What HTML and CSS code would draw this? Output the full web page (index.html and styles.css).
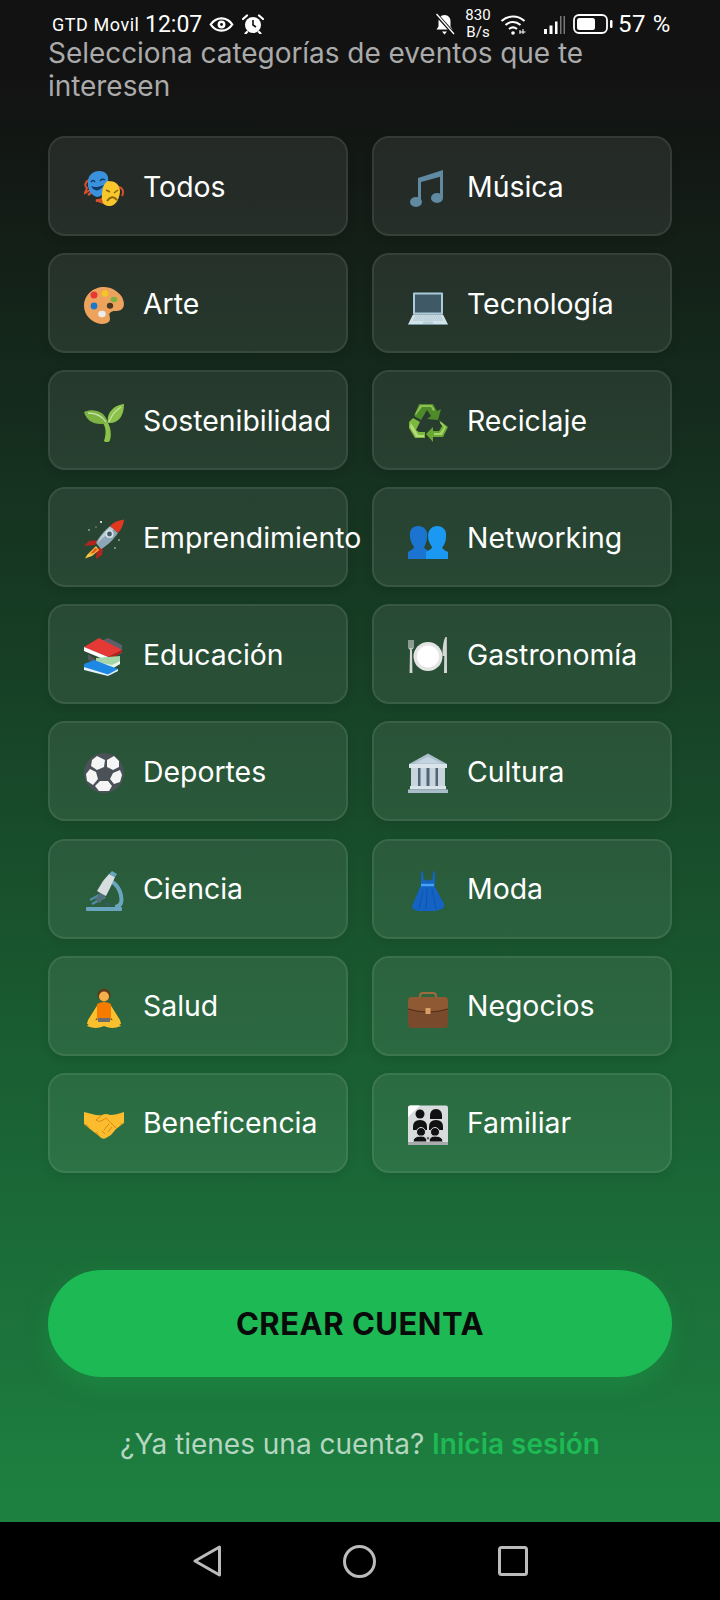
FILE: index.html
```html
<!DOCTYPE html>
<html lang="es">
<head>
<meta charset="utf-8">
<title>Crear cuenta</title>
<link rel="stylesheet" href="styles.css">
</head>
<body>
<div class="screen">
  <main class="app">
    <header class="status">
      <span class="carrier">GTD Movil</span>
      <span class="clock">12:07</span>
      <svg class="st-eye" viewBox="0 0 26 16"><path d="M1.500 8C4.500 3.500 8.500 1.500 13 1.500S21.500 3.500 24.500 8C21.500 12.500 17.500 14.500 13 14.500S4.500 12.500 1.500 8Z" fill="none" stroke="#fff" stroke-width="2.400"/><circle cx="13" cy="8" r="4.200" fill="#fff"/><circle cx="13" cy="8" r="1.500" fill="#111"/></svg>
      <svg class="st-alarm" viewBox="0 0 22 20"><circle cx="11" cy="11" r="8" fill="#fff"/><path d="M1 5 5 1.500M21 5 17 1.500M5 18 3.500 19.500M17 18 18.500 19.500" stroke="#fff" stroke-width="2.200" stroke-linecap="round"/><path d="M11 6v5l3 2" stroke="#111" stroke-width="1.600" fill="none"/></svg>
      <svg class="st-bell" viewBox="0 0 21 22"><path d="M10.500 2c4 0 6 3 6 6.500v5l2 3H2.500l2-3v-5C4.500 5 6.500 2 10.500 2Z" fill="#fff"/><path d="M8 18.500h5L10.500 21.500Z" fill="#fff"/><path d="M2 1 20 21" stroke="#111" stroke-width="3.500"/><path d="M2.500 1 20 21" stroke="#fff" stroke-width="1.300"/></svg>
      <span class="speed"><span>830</span><span>B/s</span></span>
      <svg class="st-wifi" viewBox="0 0 27 21"><path d="M1.500 7C8 1 18 1 24.500 7M5.500 11C10 7 16 7 20.500 11M9 15C11.500 13 14.500 13 17 15" fill="none" stroke="#fff" stroke-width="2"/><circle cx="13" cy="19" r="1.800" fill="#fff"/><path d="M20 20v-4M23 20v-5M25.500 18h-6" stroke="#fff" stroke-width="1"/></svg>
      <svg class="st-signal" viewBox="0 0 22 19"><path d="M1 14h3v5H1ZM6.500 10.500h3V19h-3ZM12 6.500h2.500V19H12Z" fill="#fff"/><path d="M17 1h1.500v18H17ZM20.500 1H22v18h-1.500Z" fill="#777"/></svg>
      <svg class="st-batt" viewBox="0 0 40 20"><rect x="1" y="1" width="33" height="18" rx="5" fill="none" stroke="#fff" stroke-width="1.800"/><rect x="4" y="4" width="18" height="12" rx="2.500" fill="#fff"/><rect x="37" y="6" width="2.500" height="8" rx="1.200" fill="#fff"/></svg>
      <span class="pct">57 %</span>
    </header>

    <div class="content">
      <p class="lead">Selecciona categorías de eventos que te interesen</p>

      <section class="grid">
        <button class="card"><svg class="ico" viewBox="0 0 40 40"><path d="M5 12C1 14 0 18 3 20L1 25 6 22 9 23M30 34 22 36 12 32M35 19C39 20 40 24 38 28" fill="none" stroke="#d9502e" stroke-width="2"/><path d="M8 24 4 27M19 31 12 33" stroke="#d9502e" stroke-width="2.500"/><path d="M15 3C22 3 25 7 24 14 23 22 18 29 13 29 7 28 3 20 4 14 4 7 9 3 15 3Z" fill="#3a92dc"/><path d="M7 14Q9 11 11 14M16 13Q18 10 21 12" fill="none" stroke="#123a66" stroke-width="1.500"/><path d="M7 18C10 24 16 24 20 17 15 19 11 20 7 18Z" fill="#123a66"/><path d="M24 13C31 13 36 16 36 24 35 33 30 39 25 38 19 38 17 33 18 26 18 22 20 14 24 13Z" fill="#f7c72c"/><path d="M22 22 26 24M34 22 30 25" stroke="#8a6508" stroke-width="1.500"/><path d="M23 33Q28 26 33 32" fill="none" stroke="#8a6508" stroke-width="2"/></svg><span>Todos</span></button>
        <button class="card"><svg class="ico" viewBox="0 0 40 40"><g fill="#5f8aa2"><path d="M10 10 35 2V8L13 14Z"/><path d="M10 10h3v24h-3ZM32 4h3v26h-3Z"/><ellipse cx="8" cy="34" rx="6" ry="5"/><ellipse cx="29" cy="30" rx="6" ry="5"/></g></svg><span>Música</span></button>

        <button class="card"><svg class="ico" viewBox="0 0 40 40"><path d="M20 2C9 2 0 10 0 21c0 9 8 17 17 18 4 0 9-1 9-5 0-3-2-5 1-7 3-2 8 0 11-3 3-3 2-8 0-12C34 6 27 2 20 2Z" fill="#eea35c"/><circle cx="10" cy="10" r="3.500" fill="#e53935"/><circle cx="21" cy="8.500" r="3.200" fill="#f3c623"/><ellipse cx="30" cy="14.500" rx="3.400" ry="2.800" fill="#7cb342"/><ellipse cx="26" cy="20.700" rx="3.200" ry="3" fill="#4a3423"/><circle cx="10" cy="21" r="3.400" fill="#1e78c8"/><ellipse cx="18" cy="29" rx="3.800" ry="3.200" fill="#ececec"/></svg><span>Arte</span></button>
        <button class="card"><svg class="ico" viewBox="0 0 40 40"><rect x="5" y="7.500" width="30" height="22" rx="1" fill="#a9ccdc"/><rect x="7" y="9.500" width="26" height="18" fill="#3f5a66"/><path d="M5 29.500H35L40 39.500H0Z" fill="#d3e3ea"/><path d="M7 31H33M6 33H34M5 35H35" stroke="#9db9c6" stroke-width="1" stroke-dasharray="1.500 .7"/><path d="M0 39.500H40V40.500H0Z" fill="#6ea0b4"/><path d="M15 36.500H25V39H15Z" fill="#b9d0db"/></svg><span>Tecnología</span></button>

        <button class="card"><svg class="ico" viewBox="0 0 40 40"><path d="M17 19C23 24 22 33 20 39 22 41 26 40 26 38 28 31 26 24 23 19Z" fill="#8bc34a"/><path d="M0 10C9 6 21 9 24 21 12 24 3 20 0 10Z" fill="#7cb342"/><path d="M40 2C40 13 35 22 24 21 22 11 30 3 40 2Z" fill="#8bc34a"/><path d="M4 11C11 11 18 14 22 20M37 5C31 9 27 14 25 20" fill="none" stroke="#c5e1a5" stroke-width="1.300"/></svg><span>Sostenibilidad</span></button>
        <button class="card"><svg class="ico" viewBox="0 0 40 40"><path d="M11 2H25L29 9 33 7 30 18 19 17 23 14 19 8 13 18 6 14Z" fill="#4e8a2a"/><path d="M31 18 40 25 35 35H25V40L18 32 25 25V29H31L34 24Z" fill="#6aa834"/><path d="M5 16 12 20 8 28 11 30H17V36H7L1 26V20Z" fill="#7cb83e"/><path d="M12 3H24L27 8 25 9 23 5H14L8 13 7 12Z" fill="#8cc152"/><path d="M33 20 38 25 34 33H26V31H32L36 25 32 21Z" fill="#a5d46a"/><path d="M3 21 8 29 10 33H16V35H8L2 25Z" fill="#b3dc79"/></svg><span>Reciclaje</span></button>

        <button class="card"><svg class="ico" viewBox="0 0 40 40"><path d="M14 21 5 22 0 27 11 26ZM19 29 18 36 12 40 13 29Z" fill="#b3261e"/><path d="M12 27 3 36 1 39.500 8 37 15 31Z" fill="#f4c542"/><path d="M11 29 6 35 10 34 14 30Z" fill="#e65b1c"/><path d="M26 7C21 11 14 19 12 24L17 30C23 27 30 20 34 14Z" fill="#8ca6b5"/><path d="M26 8C21 12 16 18 13.500 24L20 18C24 15 28 12 30 10Z" fill="#b9ccd6"/><path d="M40 .5C35 1 30 3 26 7L34 14C37.500 10 39.500 6 40 .5Z" fill="#e0391f"/><circle cx="25.500" cy="15" r="4" fill="#d5e1e7"/><circle cx="25.500" cy="15" r="2.400" fill="#455a64"/><g fill="#fff"><circle cx="17" cy="3" r="1"/><circle cx="5" cy="11" r=".7"/><circle cx="35" cy="21" r=".7"/><circle cx="31" cy="29" r=".7"/><circle cx="12" cy="8" r=".5"/></g></svg><span>Emprendimiento</span></button>
        <button class="card"><svg class="ico" viewBox="0 0 40 40"><path d="M10 7C16 7 20 11 19 18 19 23 17 26 16 29L22 33V40H0V33C3 31 6 30 6 28 4 25 2 22 2 17 1 11 5 7 10 7Z" fill="#1b75d0"/><path d="M29 7C35 7 39 11 38 18 38 23 36 26 34 29 36 31 38 32 40 33V40H18V33C21 31 24 30 24 28 22 25 20 22 20 17 20 11 24 7 29 7Z" fill="#1a98f2"/></svg><span>Networking</span></button>

        <button class="card"><svg class="ico" viewBox="0 0 40 40"><path d="M15 6 24 2 38 9 38 17 24 24 0 15Z" fill="#5d5f6b"/><path d="M0 11 15 2 38 14 24 21Z" fill="#e53935"/><path d="M0 11V15L24 25V21Z" fill="#fff"/><path d="M24 21 38 14V16L24 25Z" fill="#b71c1c"/><path d="M4 18 12 24 12 28 4 24Z" fill="#555"/><path d="M12 22 36 20V28L20 33 12 28Z" fill="#a5d6a7"/><path d="M12 26 28 29 36 25V28L28 33 12 30Z" fill="#e8f5e9"/><path d="M0 28 10 24 34 33 24 39 0 31Z" fill="#1e88e5"/><path d="M0 31 24 38.500 34 33V35L24 40 0 34Z" fill="#e3f2fd"/></svg><span>Educación</span></button>
        <button class="card"><svg class="ico" viewBox="0 0 40 40"><path d="M3 14V4M1 4V11C1 14 5 14 5 11V4" fill="none" stroke="#cfcfcf" stroke-width="1.200"/><path d="M2 14 1.600 37H4.400L4 14Z" fill="#d6d6d6"/><circle cx="20" cy="20.500" r="14.500" fill="#e4e4e4"/><circle cx="20" cy="20.500" r="11" fill="#fff"/><path d="M37.500 1C35 5 34.500 14 34.500 20H36.300L36 37H39L38.800 1Z" fill="#d6d6d6"/></svg><span>Gastronomía</span></button>

        <button class="card"><svg class="ico" viewBox="0 0 40 40"><circle cx="20" cy="20" r="20" fill="#4a5157"/><g fill="#f5f5f5"><path d="M13 3 21 7 20 14 13 17 7 13 8 7Z"/><path d="M23 7 30 3 35 8 35 14 29 17 23 14Z"/><path d="M6 16 12 19 14 26 9 32 3 28 2 21Z"/><path d="M29 20 36 17 38 22 36 29 30 31 26 26Z"/><path d="M16 28 24 28 28 33 25 38 15 38 11 33Z"/></g></svg><span>Deportes</span></button>
        <button class="card"><svg class="ico" viewBox="0 0 40 40"><path d="M20 .5 39 11H1Z" fill="#a9bdcb"/><path d="M20 3.500 34 10.500H6Z" fill="#c4d3dd"/><rect x="1" y="11" width="38" height="4" fill="#dbe4ea"/><rect x="4" y="15" width="32" height="20" fill="#4f6678"/><g fill="#c9d5dd"><rect x="3" y="15" width="7" height="20"/><rect x="12.500" y="15" width="6" height="20"/><rect x="21.500" y="15" width="6" height="20"/><rect x="30" y="15" width="7" height="20"/></g><rect x="2" y="33" width="36" height="3.500" fill="#dbe4ea"/><rect x="0" y="36.500" width="40" height="3.500" fill="#a9bdcb"/></svg><span>Cultura</span></button>

        <button class="card"><svg class="ico" viewBox="0 0 40 40"><path d="M28 11C34 14 39 24 37 32 36 34 34 36 31 36" fill="none" stroke="#6aa5bf" stroke-width="4"/><rect x="2" y="36" width="36" height="4" rx="1" fill="#6aa5bf"/><path d="M6 29 19 22M8 33 21 26" stroke="#4f8ea8" stroke-width="2.500"/><path d="M20 15 11 29 16 32 26 18Z" fill="#546e7a"/><path d="M25 3 31 6 27 15 22 25 13 20 19 10Z" fill="#d8dde0"/><path d="M25 3 28 0 33 3 31 6Z" fill="#6aa5bf"/><circle cx="23" cy="33" r="2" fill="#37596b"/></svg><span>Ciencia</span></button>
        <button class="card"><svg class="ico" viewBox="0 0 40 40"><path d="M13 .5H15L15.500 8Q20 11 24.500 8L25 .5H27L27 14H13Z" fill="#1565c0"/><path d="M13 14H26L36 33C37 35 36 36 35 37 30 41 12 42 5 38 4 37 4 35 5 33Z" fill="#1463c4"/><path d="M19 17 18 38M15 20 11 38M24 18 28 38" stroke="#0d4fa3" stroke-width=".8" fill="none"/><rect x="13" y="12.800" width="13" height="2.400" fill="#42a5f5"/></svg><span>Moda</span></button>

        <button class="card"><svg class="ico" viewBox="0 0 40 40"><path d="M14 16 4 32 3 36 8 36 18 24ZM26 16 36 32 37 36 32 36 22 24Z" fill="#fbc02d"/><path d="M13 16Q20 12 27 16L27 33H13Z" fill="#f57c00"/><path d="M3 38C8 31 14 31 20 34 26 31 32 31 37 38 30 41 24 40 20 38 16 40 10 41 3 38Z" fill="#fbc02d"/><rect x="14" y="30" width="12" height="4" fill="#6d6d6d"/><circle cx="20" cy="7" r="6.500" fill="#5d3a1a"/><circle cx="20" cy="8.500" r="5" fill="#f5b04c"/></svg><span>Salud</span></button>
        <button class="card"><svg class="ico" viewBox="0 0 40 40"><path d="M12 11V8Q12 5 15 5H25Q28 5 28 8V11" fill="none" stroke="#a06a3c" stroke-width="2"/><rect x="0" y="9" width="40" height="31" rx="4" fill="#7a4a2c"/><path d="M0 13Q0 9 4 9H36Q40 9 40 13V21Q20 27 0 21Z" fill="#8f5934"/><path d="M0 21Q20 27 40 21" fill="none" stroke="#4e2c17" stroke-width="1"/><rect x="17.500" y="20" width="5" height="6" fill="#d9a066"/></svg><span>Negocios</span></button>

        <button class="card"><svg class="ico" viewBox="0 0 40 40"><path d="M0 7 8 9Q14 11 18 10 22 8 26 10 32 10 40 7V18L36 21 32 24 27 30 22 33Q18 35 15 31L6 24 0 19Z" fill="#fbbc2e"/><path d="M18 10 12 15Q15 18 19 15L22 13 32 23M28 22 24 27M25 19 20 25M21 29 18 26M15 31 12 27M6 24 2 19M36 21 38 18" fill="none" stroke="#dd8a16" stroke-width="1"/></svg><span>Beneficencia</span></button>
        <button class="card"><svg class="ico" viewBox="0 0 40 40"><rect x="0" y=".5" width="40" height="39.500" rx="2" fill="#d9dcdd"/><path d="M0 12V3Q0 .5 3 .5H12Z" fill="#fff"/><circle cx="12" cy="9" r="4.500" fill="#111"/><path d="M5 22Q5 15 12 15 19 15 19 22V25H5Z" fill="#111"/><path d="M28 4C32 4 34 7 34 11V14H22V11C22 7 24 4 28 4Z" fill="#111"/><path d="M21 22Q21 15 28 15 35 15 35 22V25H21Z" fill="#111"/><g fill="#111" stroke="#d9dcdd" stroke-width="1"><circle cx="13" cy="27" r="4.500"/><circle cx="27" cy="27" r="4.500"/><path d="M5 37Q5 31 13 31 19 31 19 37Z"/><path d="M21 37Q21 31 27 31 35 31 35 37Z"/></g><path d="M18.500 31.500 20 33 21.500 31.500 20 35Z" fill="#111"/><rect x="0" y="37" width="40" height="3" fill="#a8abad"/></svg><span>Familiar</span></button>
      </section>

      <button class="cta">CREAR CUENTA</button>
      <p class="login">¿Ya tienes una cuenta? <strong>Inicia sesión</strong></p>
    </div>
  </main>

  <nav class="nav">
    <svg class="nav-back" viewBox="0 0 28 32"><path d="M26.500 2 2 16 26.500 30Z" fill="none" stroke="#bbb" stroke-width="3" stroke-linejoin="round"/></svg>
    <svg class="nav-home" viewBox="0 0 33 33"><circle cx="16.500" cy="16.500" r="15" fill="none" stroke="#bbb" stroke-width="3"/></svg>
    <svg class="nav-recent" viewBox="0 0 30 30"><rect x="1.500" y="1.500" width="27" height="27" rx="2" fill="none" stroke="#bbb" stroke-width="3"/></svg>
  </nav>
</div>
</body>
</html>
```

FILE: styles.css
```css
*{box-sizing:border-box}
html,body{margin:0;padding:0}
.screen{width:720px;height:1600px;background:#000;overflow:hidden}
.app{height:1522px;background:linear-gradient(180deg,#121212 5%,#1d7f40 98%);font-family:Inter,sans-serif;color:#fff}

.status{height:37px;padding:11px 49px 0 52px;display:flex;align-items:center;font-family:Roboto,sans-serif;white-space:nowrap}
.status>*{flex:none}
.carrier{width:88px;font-size:18px;letter-spacing:.55px}
.clock{width:57px;margin-left:5px;font-size:23px}
.st-eye{width:25px;height:15px;margin-left:7px}
.st-alarm{width:22px;height:20px;margin-left:8px}
.st-bell{width:21px;height:22px;margin-left:170px}
.speed{width:26px;margin-left:10px;display:flex;flex-direction:column;align-items:center;font-size:15px;line-height:17px}
.st-wifi{width:27px;height:21px;margin-left:9px}
.st-signal{width:22px;height:19px;margin-left:16px}
.st-batt{width:40px;height:20px;margin-left:8px}
.pct{width:53px;margin-left:5px;font-size:24px;letter-spacing:.6px}

.content{padding:0 48px}
.lead{margin:0;font-size:28px;line-height:33px;color:#aaa;letter-spacing:-.05px}
.grid{display:grid;grid-template-columns:repeat(2,minmax(0,1fr));column-gap:24px;row-gap:17.100px;margin-top:33px}
.card{height:100px;display:flex;align-items:center;gap:19px;padding:0 0 0 34px;border:2px solid rgba(255,255,255,.08);border-radius:17px;background:rgba(255,255,255,.08);box-shadow:0 4px 10px rgba(0,0,0,.08);color:#fff;font:inherit;font-size:28.400px;white-space:nowrap}
.ico{width:40px;height:40px;margin-top:4px;flex:none}

.cta{display:block;width:100%;height:107px;margin-top:97px;border:0;border-radius:54px;background:#1db954;box-shadow:0 8px 24px rgba(29,185,84,.25);color:#0a0a0a;font:700 31px Inter,sans-serif;letter-spacing:.5px}
.login{margin:50px 0 0;text-align:center;font-size:28px;line-height:34px;color:#b5d6c0}
.login strong{color:#1db954;font-weight:600}

.nav{height:78px;display:flex;align-items:center;justify-content:center;gap:122px}
.nav-back{width:28px;height:32px}
.nav-home{width:33px;height:33px}
.nav-recent{width:30px;height:30px}
```
